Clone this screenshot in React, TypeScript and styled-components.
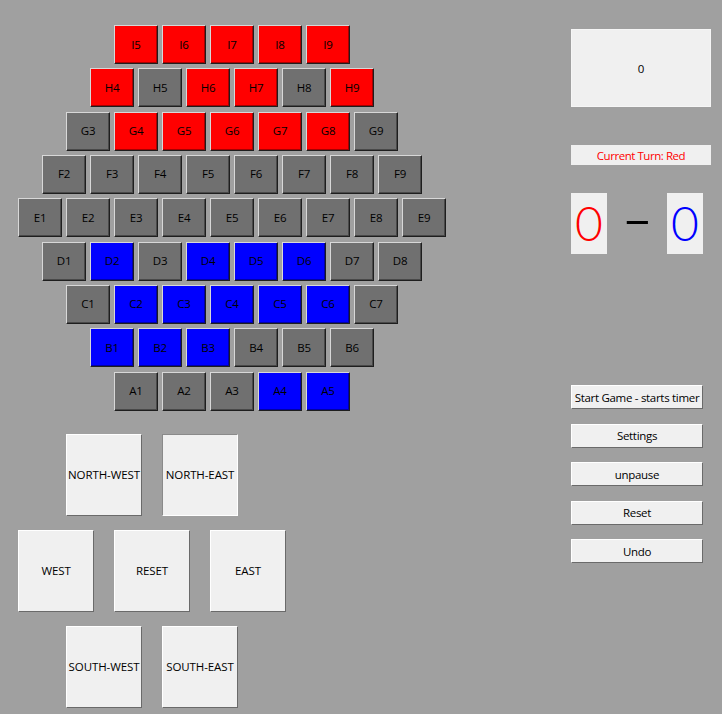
import React from "react";
import styled, { createGlobalStyle } from "styled-components";

const Global = createGlobalStyle`
  html, body { margin: 0; padding: 0; background: #a0a0a0; }
  body { font-family: "Open Sans", "Noto Sans", sans-serif; font-size: 12px; }
  * { box-sizing: border-box; }
`;

type Side = "r" | "b" | "n";

const ROWS: { letter: string; start: number; cells: Side[] }[] = [
  { letter: "I", start: 5, cells: ["r", "r", "r", "r", "r"] },
  { letter: "H", start: 4, cells: ["r", "n", "r", "r", "n", "r"] },
  { letter: "G", start: 3, cells: ["n", "r", "r", "r", "r", "r", "n"] },
  { letter: "F", start: 2, cells: ["n", "n", "n", "n", "n", "n", "n", "n"] },
  { letter: "E", start: 1, cells: ["n", "n", "n", "n", "n", "n", "n", "n", "n"] },
  { letter: "D", start: 1, cells: ["n", "b", "n", "b", "b", "b", "n", "n"] },
  { letter: "C", start: 1, cells: ["n", "b", "b", "b", "b", "b", "n"] },
  { letter: "B", start: 1, cells: ["b", "b", "b", "n", "n", "n"] },
  { letter: "A", start: 1, cells: ["n", "n", "n", "b", "b"] },
];

const FILL: Record<Side, string> = { r: "#ff0000", b: "#0000ff", n: "#707070" };

const Page = styled.div`
  display: flex;
  align-items: flex-start;
  gap: 125px;
  padding: 25px 0 0 18px;
  width: 722px;
  height: 714px;
  overflow: hidden;
`;

const LeftColumn = styled.div`
  display: flex;
  flex-direction: column;
  width: 428px;
  gap: 23px;
`;

const Board = styled.div`
  display: flex;
  flex-direction: column;
  align-items: center;
  gap: 4.33px;
`;

const BoardRow = styled.div`
  display: flex;
  gap: 4px;
`;

const Cell = styled.div<{ $fill: string }>`
  width: 44px;
  height: 39px;
  background: ${(p) => p.$fill};
  border: 1px solid;
  border-color: #d8d8d8 #1e1e1e #1e1e1e #d8d8d8;
  box-shadow: inset -1px -1px 0 rgba(0, 0, 0, 0.35);
  display: flex;
  align-items: center;
  justify-content: center;
  color: #000;
  font-size: 11.5px;
  letter-spacing: -0.2px;
  padding-bottom: 1px;
`;

const Pad = styled.div`
  display: flex;
  flex-direction: column;
  gap: 14px;
  width: 268px;
`;

const PadRow = styled.div`
  display: flex;
  justify-content: center;
  gap: 20px;
`;

const DirButton = styled.div<{ $sunken?: boolean }>`
  width: 76px;
  height: 82px;
  background: #f0f0f0;
  border: 1px solid;
  border-color: ${(p) =>
    p.$sunken ? "#8a8a8a #ffffff #ffffff #8a8a8a" : "#ffffff #6a6a6a #6a6a6a #ffffff"};
  display: flex;
  align-items: center;
  justify-content: center;
  color: #000;
  font-size: 11.5px;
  letter-spacing: -0.1px;
  white-space: nowrap;
`;

const RightColumn = styled.div`
  display: flex;
  flex-direction: column;
  width: 140px;
  padding-top: 4px;
`;

const TimerBox = styled.div`
  width: 140px;
  height: 78px;
  background: #f0f0f0;
  border: 1px solid #f6f6f6;
  display: flex;
  align-items: center;
  justify-content: center;
  color: #000;
  font-size: 11.5px;
`;

const TurnLabel = styled.div`
  margin-top: 38px;
  width: 140px;
  height: 20px;
  background: #f0f0f0;
  display: flex;
  align-items: center;
  justify-content: center;
  color: #ff0000;
  font-size: 11.5px;
  letter-spacing: -0.45px;
`;

const ScoreRow = styled.div`
  margin-top: 28px;
  width: 132px;
  height: 61px;
  display: flex;
  align-items: center;
  justify-content: space-between;
`;

const ScoreBox = styled.div<{ $color: string }>`
  width: 36px;
  height: 61px;
  background: #f0f0f0;
  display: flex;
  align-items: center;
  justify-content: center;
  color: ${(p) => p.$color};
  font-family: "Lato", sans-serif;
  font-weight: 300;
  font-size: 48px;
  line-height: 1;
  padding-bottom: 2px;
`;

const Dash = styled.div`
  color: #000;
  font-family: "Lato", sans-serif;
  font-weight: 400;
  font-size: 46px;
  line-height: 1;
  padding-bottom: 10px;
  transform: scaleX(1.15);
`;

const ButtonStack = styled.div`
  margin-top: 131px;
  display: flex;
  flex-direction: column;
  gap: 14.5px;
`;

const SideButton = styled.div`
  width: 132px;
  height: 24px;
  background: #f0f0f0;
  border: 1px solid;
  border-color: #ffffff #6a6a6a #6a6a6a #ffffff;
  display: flex;
  align-items: center;
  justify-content: center;
  color: #000;
  font-size: 11.5px;
  letter-spacing: -0.3px;
  white-space: nowrap;
`;

export default function App() {
  return (
    <>
      <Global />
      <Page>
        <LeftColumn>
          <Board>
            {ROWS.map((row) => (
              <BoardRow key={row.letter}>
                {row.cells.map((s, i) => (
                  <Cell key={i} $fill={FILL[s]}>
                    {row.letter}
                    {row.start + i}
                  </Cell>
                ))}
              </BoardRow>
            ))}
          </Board>
          <Pad>
            <PadRow>
              <DirButton>NORTH-WEST</DirButton>
              <DirButton $sunken>NORTH-EAST</DirButton>
            </PadRow>
            <PadRow>
              <DirButton>WEST</DirButton>
              <DirButton>RESET</DirButton>
              <DirButton>EAST</DirButton>
            </PadRow>
            <PadRow>
              <DirButton>SOUTH-WEST</DirButton>
              <DirButton>SOUTH-EAST</DirButton>
            </PadRow>
          </Pad>
        </LeftColumn>
        <RightColumn>
          <TimerBox>0</TimerBox>
          <TurnLabel>Current Turn: Red</TurnLabel>
          <ScoreRow>
            <ScoreBox $color="#ff0000">0</ScoreBox>
            <Dash>–</Dash>
            <ScoreBox $color="#0000ff">0</ScoreBox>
          </ScoreRow>
          <ButtonStack>
            <SideButton>Start Game - starts timer</SideButton>
            <SideButton>Settings</SideButton>
            <SideButton>unpause</SideButton>
            <SideButton>Reset</SideButton>
            <SideButton>Undo</SideButton>
          </ButtonStack>
        </RightColumn>
      </Page>
    </>
  );
}
